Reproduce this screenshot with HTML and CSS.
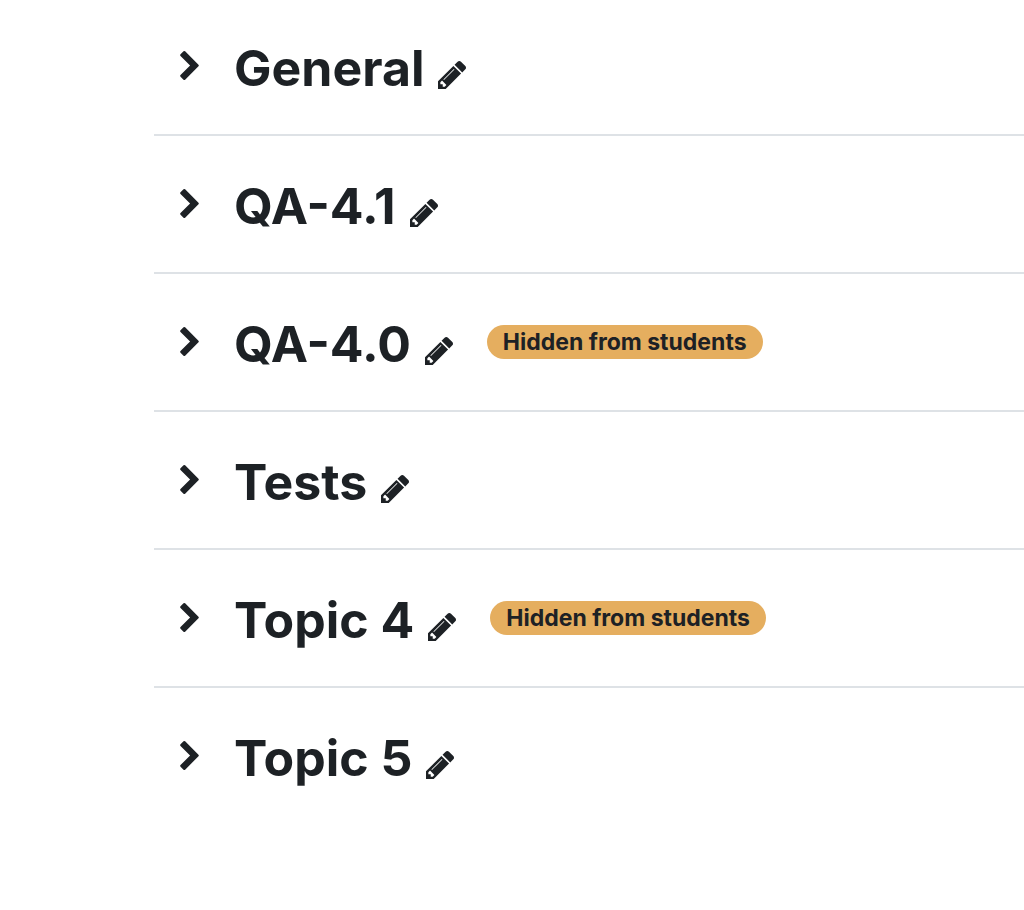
FILE: index.html
```html
<!DOCTYPE html>
<html lang="en">
<head>
<meta charset="utf-8">
<title>Course sections</title>
<link rel="stylesheet" href="styles.css">
</head>
<body>
<svg class="sprite" aria-hidden="true">
<symbol id="chevron" viewBox="90 -192 1036 1612"><path d="M1107 659l-742 742q-19 19-45 19t-45-19l-166-166q-19-19-19-45t19-45l531-531-531-531q-19-19-19-45t19-45l166-166q19-19 45-19t45 19l742 742q19 19 19 45t-19 45z"/></symbol>
<symbol id="pencil" viewBox="0 149 1515 1515"><path d="M363 1536l91-91-235-235-91 91v107h128v128h107zM886 608q0-22-22-22-10 0-17 7l-542 542q-7 7-7 17 0 22 22 22 10 0 17-7l542-542q7-7 7-17zM832 416l416 416-832 832h-416v-416zM1515 512q0 53-37 90l-166 166-416-416 166-165q36-38 90-38 53 0 91 38l235 234q37 39 37 91z"/></symbol>
</svg>
<main class="sections">
<section class="section"><button class="toggle" aria-label="Expand General"><svg class="chevron"><use href="#chevron"/></svg></button><h3 class="title">General</h3><button class="edit" aria-label="Edit General"><svg class="pencil"><use href="#pencil"/></svg></button></section>
<section class="section"><button class="toggle" aria-label="Expand QA-4.1"><svg class="chevron"><use href="#chevron"/></svg></button><h3 class="title">QA-4.1</h3><button class="edit" aria-label="Edit QA-4.1"><svg class="pencil"><use href="#pencil"/></svg></button></section>
<section class="section"><button class="toggle" aria-label="Expand QA-4.0"><svg class="chevron"><use href="#chevron"/></svg></button><h3 class="title">QA-4.0</h3><button class="edit" aria-label="Edit QA-4.0"><svg class="pencil"><use href="#pencil"/></svg></button><span class="badge">Hidden from students</span></section>
<section class="section"><button class="toggle" aria-label="Expand Tests"><svg class="chevron"><use href="#chevron"/></svg></button><h3 class="title">Tests</h3><button class="edit" aria-label="Edit Tests"><svg class="pencil"><use href="#pencil"/></svg></button></section>
<section class="section"><button class="toggle" aria-label="Expand Topic 4"><svg class="chevron"><use href="#chevron"/></svg></button><h3 class="title">Topic 4</h3><button class="edit" aria-label="Edit Topic 4"><svg class="pencil"><use href="#pencil"/></svg></button><span class="badge">Hidden from students</span></section>
<section class="section"><button class="toggle" aria-label="Expand Topic 5"><svg class="chevron"><use href="#chevron"/></svg></button><h3 class="title">Topic 5</h3><button class="edit" aria-label="Edit Topic 5"><svg class="pencil"><use href="#pencil"/></svg></button></section>
</main>
</body>
</html>
```
FILE: styles.css
```css
body { display: flow-root; margin: 0; background: #fff; color: #1d2125; font-family: Inter, "Liberation Sans", sans-serif; }
.sprite { display: none; }
.sections { margin: -2px 0 0 154px; }
.section { display: flex; align-items: center; box-sizing: border-box; min-height: 138px; border-bottom: 2px solid #dee2e6; padding-left: 26px; }
.section:last-child { border-bottom-color: transparent; }
.toggle, .edit { display: flex; margin: 0; padding: 0; border: 0; background: none; color: inherit; }
.toggle { width: 54px; padding-bottom: 1px; }
.chevron { width: 19px; height: 29px; fill: currentColor; }
.title { margin: 0; padding-top: 4px; font-size: 50px; line-height: 62px; font-weight: 700; }
.edit { margin-left: 14px; padding-top: 18px; }
.pencil { width: 28px; height: 28px; fill: currentColor; }
.badge { margin-left: 34px; padding: 0 16px; border-radius: 17px; background: #e5ae5f; font-size: 23px; line-height: 34px; font-weight: 700; white-space: nowrap; }
```
